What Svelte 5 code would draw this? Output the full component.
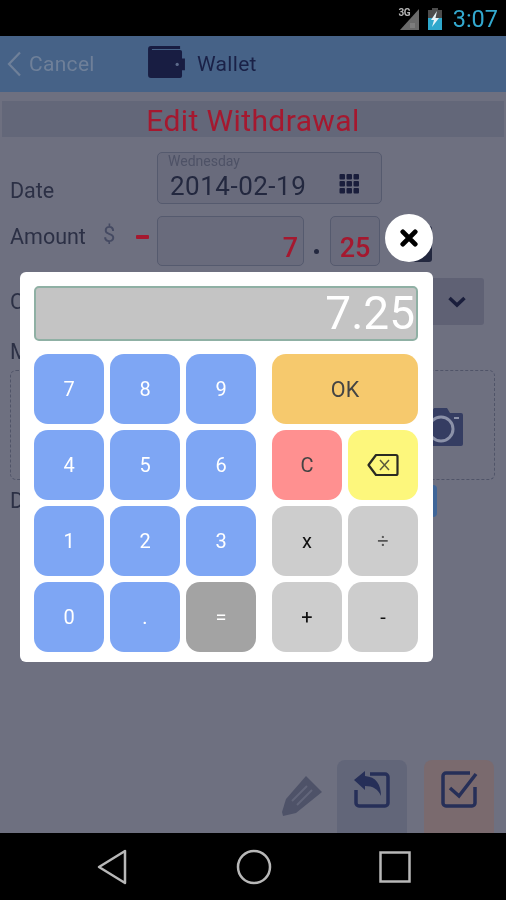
<script>
  const numRows = [
    [{ t: '7' }, { t: '8' }, { t: '9' }],
    [{ t: '4' }, { t: '5' }, { t: '6' }],
    [{ t: '1' }, { t: '2' }, { t: '3' }],
    [{ t: '0' }, { t: '.' }, { t: '=', c: 'eq' }]
  ].flat();
</script>

<div class="screen">
  <div class="status">
    <span class="net">3G</span>
    <svg class="signal" width="19" height="21" viewBox="0 0 19 21"><path d="M19 0V21H0Z" fill="#6a6a6a"/><path d="M10 14h5v5h-5z" fill="#8a8a8a" opacity=".6"/></svg>
    <svg class="batt" width="16" height="22" viewBox="0 0 16 22"><path d="M5 0h6v2h4v8H1V2h4z" fill="#4d4d4d"/><path d="M1 10h14v12H1z" fill="#2ea8cc"/><path d="M10 3 4 12h3l-2 7 7-9H8.500z" fill="#e8f4f8"/></svg>
    <span class="time">3:07</span>
  </div>

  <header class="bar">
    <svg class="chev" width="15" height="26" viewBox="0 0 15 26"><path d="M13 1.500 2 13l11 11.500" fill="none" stroke="#6f8099" stroke-width="2.200"/></svg>
    <span class="cancel">Cancel</span>
    <svg class="wallet" width="37" height="33" viewBox="0 0 38 34"><path d="M3 0h30v3H4v1h29a2 2 0 0 1 2 2v7h3v12h-3v6a2 2 0 0 1-2 2H3a3 3 0 0 1-3-3V3a3 3 0 0 1 3-3z" fill="#181d42"/><circle cx="30" cy="19" r="1.700" fill="#5c6a8a"/></svg>
    <span class="brand">Wallet</span>
  </header>

  <main class="form">
    <h1>Edit Withdrawal</h1>

    <div class="row date-row">
      <span class="label">Date</span>
      <div class="box date-box">
        <span class="day">Wednesday</span>
        <span class="date">2014-02-19</span>
        <svg class="grid-ic" width="21" height="20" viewBox="0 0 20 20" fill="#1a1e3c">
          {#each [0, 7, 14] as y}{#each [0, 7, 14] as x}<rect x={x} y={y} width="5.500" height="5.500" rx="1" />{/each}{/each}
        </svg>
      </div>
    </div>

    <div class="row amount-row">
      <span class="label amt">Amount</span>
      <span class="cur">$</span>
      <span class="minus"></span>
      <div class="box whole"><span>7</span></div>
      <span class="dot"></span>
      <div class="box cents"><span>25</span></div>
      <span class="calc-ic"></span>
    </div>

    <div class="row cat-row">
      <span class="label">Category</span>
      <div class="select">
        <svg width="20" height="12" viewBox="0 0 20 12"><path d="M2.500 2 10 9l7.500-7" fill="none" stroke="#1a1e3c" stroke-width="3.500"/></svg>
      </div>
    </div>

    <span class="label memo-label">Memo</span>
    <div class="memo">
      <svg class="camera" width="46" height="38" viewBox="0 0 46 38"><path d="M14 5 17 0h13l3 5h11a2 2 0 0 1 2 2v29a2 2 0 0 1-2 2H3a2 2 0 0 1-2-2V7a2 2 0 0 1 2-2z" fill="#353d62"/><circle cx="24" cy="21" r="12" fill="#353d62" stroke="#8b91a8" stroke-width="3"/><rect x="37" y="9" width="5" height="2" fill="#8b91a8"/></svg>
    </div>

    <div class="row due-row">
      <span class="label">Due</span>
      <span class="blue"></span>
    </div>

    <div class="actions">
      <svg class="pencil" width="42" height="42" viewBox="0 0 42 42"><path d="M25 1 41 17 15 38 2 41l-1-4 4-13z" fill="#4e5268"/><path d="M11 26 26 11M16 30 31 15" stroke="#62657a" stroke-width="2" fill="none"/></svg>
      <div class="act gray">
        <svg width="38" height="38" viewBox="0 0 38 38"><path d="M17 3h15a3 3 0 0 1 3 3v26a3 3 0 0 1-3 3H6a3 3 0 0 1-3-3V19" fill="none" stroke="#262f58" stroke-width="3.500"/><path d="M1 9 12 0v5c11 1 16 8 16 20-3-7-8-10-16-10v4z" fill="#262f58"/></svg>
      </div>
      <div class="act red">
        <svg width="38" height="38" viewBox="0 0 38 38"><path d="M30 2H6a3 3 0 0 0-3 3v27a3 3 0 0 0 3 3h26a3 3 0 0 0 3-3V16" fill="none" stroke="#262f58" stroke-width="3.500"/><path d="M10 17l9 8L36 3" fill="none" stroke="#262f58" stroke-width="3.500"/></svg>
      </div>
    </div>
  </main>

  <nav class="nav">
    <svg width="32" height="36" viewBox="0 0 32 36"><path d="M29 2v32L3 18z" fill="none" stroke="#b8b8b8" stroke-width="2.500" stroke-linejoin="round"/></svg>
    <svg width="36" height="36" viewBox="0 0 36 36"><circle cx="18" cy="18" r="16" fill="none" stroke="#b8b8b8" stroke-width="2.500"/></svg>
    <svg width="32" height="32" viewBox="0 0 32 32"><rect x="1.500" y="1.500" width="29" height="29" fill="none" stroke="#b8b8b8" stroke-width="2.500"/></svg>
  </nav>

  <div class="modal">
    <div class="display">7.25</div>
    <div class="keys">
      <div class="pad">
        {#each numRows as k}
          <button class="key num {k.c ?? ''}">{k.t}</button>
        {/each}
      </div>
      <div class="ops">
        <button class="key ok">OK</button>
        <button class="key clear">C</button>
        <button class="key back" aria-label="Backspace">
          <svg width="32" height="24" viewBox="0 0 32 24"><path d="M9 2h20a1.500 1.500 0 0 1 1.500 1.500v17A1.500 1.500 0 0 1 29 22H9L1.500 12z" fill="none" stroke="#2a2a22" stroke-width="2.200" stroke-linejoin="round"/><path d="M13 7l9 10M22 7l-9 10" stroke="#5a5a3c" stroke-width="1.500"/></svg>
        </button>
        <button class="key op">x</button>
        <button class="key op light">÷</button>
        <button class="key op">+</button>
        <button class="key op">-</button>
      </div>
    </div>
  </div>

  <button class="close" aria-label="Close">
    <svg width="18" height="18" viewBox="0 0 22 22"><path d="M3.500 3.500l15 15M18.500 3.500l-15 15" stroke="#000" stroke-width="6" stroke-linecap="round"/></svg>
  </button>
</div>

<style>
  :global(body) { margin: 0; background: #000; }
  .screen {
    position: relative;
    width: 506px;
    height: 900px;
    display: flex;
    flex-direction: column;
    overflow: hidden;
    background: #6e7080;
    font-family: Roboto, "Liberation Sans", sans-serif;
    filter: blur(.4px);
  }
  .status {
    height: 36px;
    flex: none;
    background: #000;
    display: flex;
    align-items: center;
    justify-content: flex-end;
    padding-right: 8px;
    box-sizing: border-box;
    position: relative;
  }
  .net { position: absolute; right: 96px; top: 7px; font-size: 10px; font-weight: 700; color: #b5b5b5; letter-spacing: -.5px; }
  .signal { margin: 3px 8px 0 0; }
  .batt { margin: 2px 10px 0 0; }
  .time { color: #33a9cf; font-size: 23.500px; line-height: 36px; padding-top: 1px; }

  .bar {
    height: 56px;
    flex: none;
    background: #466287;
    display: flex;
    align-items: center;
    box-sizing: border-box;
    padding-left: 7px;
  }
  .chev { margin-right: 7px; }
  .cancel { color: #6f8099; font-size: 21px; width: 119px; letter-spacing: .3px; }
  .wallet { margin-right: 12px; margin-top: -4px; }
  .brand { color: #1a2147; font-size: 21px; letter-spacing: .3px; }

  .form { flex: 1; display: flex; flex-direction: column; min-height: 0; }
  h1 {
    margin: 9px 2px 0;
    height: 36px;
    background: #636779;
    color: #a5182f;
    font-size: 30px;
    font-weight: 400;
    line-height: 39px;
    text-align: center;
    letter-spacing: .4px;
  }
  .row { display: flex; position: relative; }
  .label { color: #2c3045; font-size: 21.500px; }
  .box {
    box-sizing: border-box;
    border: 1px solid #555a6e;
    border-radius: 5px;
    background: #696b7c;
  }
  .date-row { margin-top: 15px; height: 52px; padding-left: 10px; }
  .date-row .label { width: 147px; align-self: flex-end; line-height: 24px; margin-bottom: 1px; }
  .date-box { width: 225px; height: 52px; position: relative; }
  .day { position: absolute; left: 10px; top: 0; font-size: 14px; color: #4e5266; }
  .date { position: absolute; left: 12px; top: 17px; font-size: 26px; line-height: 32px; letter-spacing: .5px; color: #23283f; }
  .grid-ic { position: absolute; left: 181px; top: 21px; }

  .amount-row { margin-top: 12px; height: 50px; padding-left: 10px; }
  .amt { line-height: 41px; height: 40px; width: 93px; }
  .cur { color: #454a62; font-size: 22px; line-height: 38px; width: 33px; }
  .minus { width: 13px; height: 4px; background: #a5182f; margin-top: 19px; margin-right: 8px; border-radius: 1px; }
  .whole, .cents { color: #a5182f; font-size: 27px; font-weight: 500; line-height: 30px; text-align: right; display: flex; align-items: flex-end; justify-content: flex-end; padding: 0 5px 2px; }
  .whole { width: 147px; height: 50px; }
  .dot { width: 5px; height: 5px; background: #23283f; border-radius: 50%; margin: 33px 11px 0 10px; }
  .cents { width: 50px; height: 50px; justify-content: center; padding: 0 0 2px; font-size: 27px; font-weight: 500; }
  .calc-ic { width: 30px; height: 36px; margin: 10px 0 0 22px; background: #23283f; border-radius: 3px; }

  .cat-row { margin-top: 12px; height: 47px; padding-left: 10px; justify-content: space-between; padding-right: 22px; align-items: center; }
  .select { width: 140px; height: 47px; background: #5f6174; border-radius: 3px; display: flex; align-items: center; justify-content: flex-end; padding-right: 17px; box-sizing: border-box; }

  .memo-label { margin: 15px 0 0 10px; line-height: 24px; height: 30px; }
  .memo {
    box-sizing: border-box;
    margin: 0 11px 0 10px;
    height: 110px;
    border: 1px dashed #505468;
    border-radius: 6px;
    position: relative;
    flex: none;
  }
  .camera { position: absolute; right: 31px; top: 37px; }
  .due-row { margin-top: 8px; height: 30px; padding-left: 10px; justify-content: space-between; }
  .blue { width: 50px; height: 32px; margin: -3px 69px 0 0; background: #3f6598; border-radius: 4px; }

  .actions {
    margin-top: auto;
    display: flex;
    align-items: flex-start;
    justify-content: flex-end;
    padding-right: 12px;
    height: 73px;
    flex: none;
  }
  .pencil { margin: 15px 14px 0 0; }
  .act { width: 70px; height: 73px; border-radius: 8px 8px 0 0; display: flex; justify-content: center; padding-top: 11px; box-sizing: border-box; }
  .act.gray { background: #626679; margin-right: 17px; }
  .act.red { background: #7a6a6e; }

  .nav {
    height: 67px;
    flex: none;
    background: #000;
    display: grid;
    grid-template-columns: 100px 182px 100px;
    justify-content: center;
    justify-items: center;
    align-items: center;
    box-sizing: border-box;
    padding-left: 2px;
  }
  .nav svg:first-child { transform: translateX(-1px); }

  .modal {
    position: absolute;
    left: 20px;
    top: 272px;
    width: 413px;
    height: 390px;
    box-sizing: border-box;
    background: #fff;
    border-radius: 6px;
    padding: 14px 15px 0 14px;
  }
  .display {
    box-sizing: border-box;
    height: 55px;
    background: #c4c4c4;
    border: 2px solid #8fb0a4;
    border-radius: 5px;
    color: #fff;
    font-size: 46px;
    line-height: 51px;
    text-align: right;
    padding-right: 1px;
    font-weight: 400;
  }
  .keys { display: flex; gap: 16px; margin-top: 13px; }
  .pad, .ops { display: grid; gap: 6px; grid-auto-rows: 70px; }
  .pad { grid-template-columns: repeat(3, 70px); }
  .ops { grid-template-columns: repeat(2, 70px); }
  .key {
    border: 0;
    padding: 0;
    border-radius: 14px;
    font-family: inherit;
    font-size: 20px;
    display: flex;
    align-items: center;
    justify-content: center;
  }
  .num { background: #7ea6f4; color: #fff; }
  .eq { background: #a3a3a3; }
  .ok { grid-column: span 2; background: #f6c96d; color: #444; font-size: 21.500px; }
  .clear { background: #ff9090; color: #444; }
  .back { background: #fdf77c; }
  .op { background: #cdcdcd; color: #111; }
  .op.light { color: #555; }

  .close {
    position: absolute;
    left: 385px;
    top: 214px;
    width: 48px;
    height: 48px;
    padding: 0;
    border: 0;
    border-radius: 50%;
    background: #fff;
    display: flex;
    align-items: center;
    justify-content: center;
  }
</style>
